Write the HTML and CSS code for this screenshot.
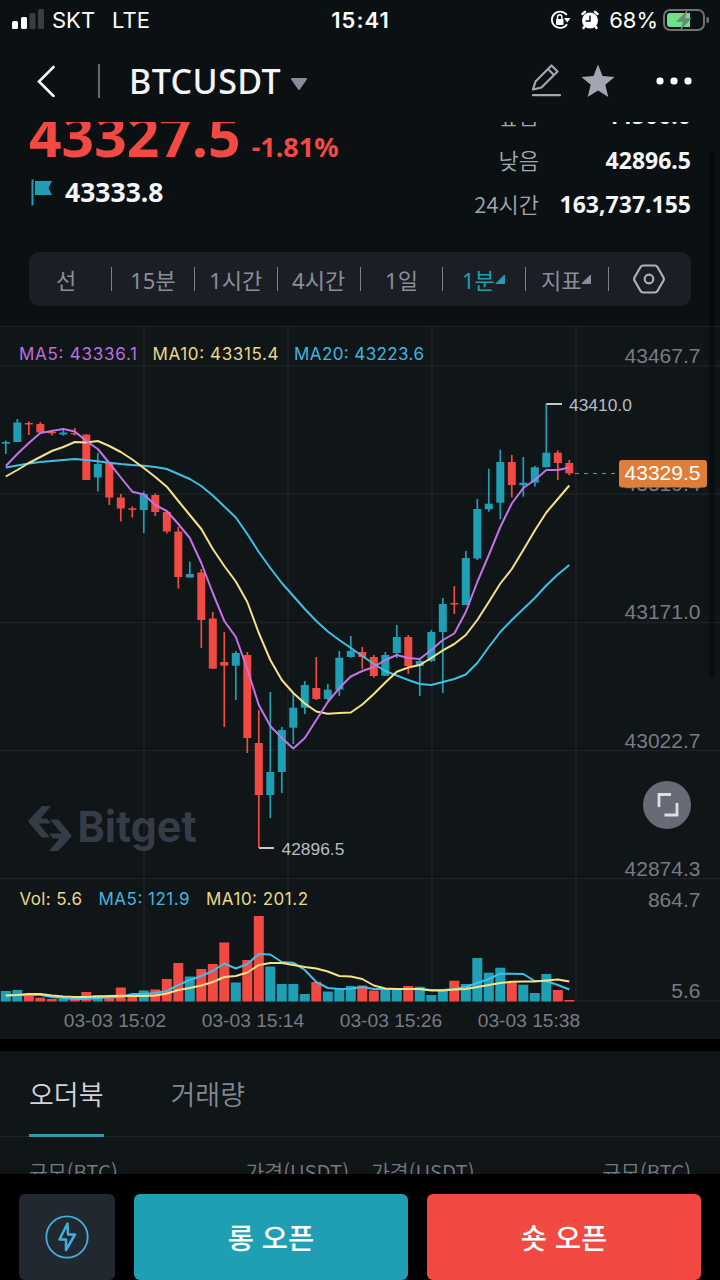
FILE: index.html
```html
<!DOCTYPE html>
<html lang="ko">
<head>
    <meta charset="UTF-8">
    <meta name="viewport" content="width=device-width, initial-scale=1.0">
    <title>BTCUSDT</title>
    <link rel="stylesheet" href="styles.css">
</head>
<body>
    <div class="app">
        <div class="status-bar">
            <div class="status-left">
                <svg class="signal" width="33" height="21" viewBox="0 0 33 21">
                    <rect x="0" y="12" width="6" height="8" rx="1.5" fill="#fff"/>
                    <rect x="9" y="8" width="6" height="12" rx="1.5" fill="#fff"/>
                    <rect x="17.5" y="4" width="6" height="16" rx="1.5" fill="#3a3d40"/>
                    <rect x="26" y="0" width="6" height="20" rx="1.5" fill="#3a3d40"/>
                </svg>
                <span>SKT</span>
                <span class="network">LTE</span>
            </div>
            <div class="time">15:41</div>
            <div class="status-right">
                <svg width="21" height="20" viewBox="0 0 21 20">
                    <path d="M16.8 5A8.2 8.2 0 1 0 17 14.2" fill="none" stroke="#fff" stroke-width="1.8"/>
                    <path d="M14 8H20.5L17.3 12.5Z" fill="#fff"/>
                    <rect x="6" y="9" width="7.5" height="6" rx="1" fill="#fff"/>
                    <path d="M7.5 9.5V7a2.2 2.2 0 0 1 4.4 0V9.5" fill="none" stroke="#fff" stroke-width="1.4"/>
                </svg>
                <svg class="alarm" width="18" height="20" viewBox="0 0 18 20">
                    <circle cx="9" cy="10.5" r="8" fill="#fff"/>
                    <path d="M1.5 4L4 1.8M16.5 4L14 1.8M3.5 16.500L2.500 18M14.500 16.500L15.500 18" stroke="#fff" stroke-width="2.4" stroke-linecap="round"/>
                    <path d="M9 5.500V11H4.500" fill="none" stroke="#0b1013" stroke-width="1.500"/>
                </svg>
                <span>68%</span>
                <svg class="battery" width="46" height="22" viewBox="0 0 46 22">
                    <rect x="1" y="1" width="40" height="20" rx="6" fill="none" stroke="#6c7174" stroke-width="2"/>
                    <path d="M7 4H27V18H7a3 3 0 0 1-3-3V7a3 3 0 0 1 3-3Z" fill="#6fe08b"/>
                    <path d="M43.500 8a3 3 0 0 1 0 6Z" fill="#6c7174"/>
                    <path d="M24 2L14 12.500H20.500L18 20L28 9.500H21.500Z" fill="#549665" stroke="#7d8582" stroke-width="1"/>
                </svg>
            </div>
        </div>

        <div class="header">
            <svg class="back" width="20" height="32" viewBox="0 0 20 32">
                <path d="M17.500 2L3 16.500L17.500 31" fill="none" stroke="#f4f5f7" stroke-width="2.600" stroke-linecap="round"/>
            </svg>
            <div class="divider"></div>
            <h1 class="symbol">BTCUSDT</h1>
            <svg class="caret" width="18" height="14" viewBox="0 0 18 14">
                <path d="M2 2H16L9 12Z" fill="#878c97" stroke="#878c97" stroke-width="2" stroke-linejoin="round"/>
            </svg>
            <div class="header-icons">
                <svg width="31" height="34" viewBox="0 0 31 34">
                    <path d="M2 25.500L4.500 17.500L20.500 1.500L26.500 7.500L10.500 23.500Z M17 5L23 11" fill="none" stroke="#a3a6b1" stroke-width="2.200" stroke-linejoin="round"/>
                    <path d="M2 31.200H29" stroke="#a3a6b1" stroke-width="2.300" stroke-linecap="round"/>
                </svg>
                <svg class="star" width="34" height="34" viewBox="0 0 34 34">
                    <path d="M17 0.500L21.500 12L33.500 13L24.300 20.700L27.300 33L17 26.500L6.700 33L9.700 20.700L0.500 13L12.500 12Z" fill="#a3a6b1"/>
                </svg>
                <svg class="more" width="36" height="8" viewBox="0 0 36 8">
                    <rect x="0.500" y="0.500" width="7" height="7" rx="3" fill="#fff"/>
                    <rect x="14.500" y="0.500" width="7" height="7" rx="3" fill="#fff"/>
                    <rect x="28.500" y="0.500" width="7" height="7" rx="3" fill="#fff"/>
                </svg>
            </div>
        </div>

        <div class="content">
            <div class="ticker">
                <div class="ticker-price">
                    <div class="last">
                        <span class="last-price">43327.5</span>
                        <span class="change">-1.81%</span>
                    </div>
                    <div class="mark">
                        <svg width="22" height="27" viewBox="0 0 22 27">
                            <path d="M1.500 0.500V26.500" stroke="#1f9fb3" stroke-width="2"/>
                            <path d="M4 2H21L17.500 9L21 16H4Z" fill="#1f9fb3"/>
                        </svg>
                        <span>43333.8</span>
                    </div>
                </div>
                <div class="ticker-stats">
                    <div class="stat"><span>높음</span><b>44500.0</b></div>
                    <div class="stat"><span>낮음</span><b>42896.5</b></div>
                    <div class="stat"><span>24시간</span><b>163,737.155</b></div>
                </div>
            </div>

            <div class="intervals">
                <div class="interval first">선</div>
                <div class="interval">15분</div>
                <div class="interval">1시간</div>
                <div class="interval">4시간</div>
                <div class="interval">1일</div>
                <div class="interval active">1분<svg width="10" height="10" viewBox="0 0 10 10"><path d="M1 9.500H9.500V1Z" fill="currentColor" stroke="currentColor" stroke-linejoin="round"/></svg></div>
                <div class="interval">지표<svg width="10" height="10" viewBox="0 0 10 10"><path d="M1 9.500H9.500V1Z" fill="currentColor" stroke="currentColor" stroke-linejoin="round"/></svg></div>
                <div class="interval">
                    <svg width="32" height="30" viewBox="0 0 32 30">
                        <path d="M10 1.500H22Q23.500 1.500 24.300 2.800L30.500 13.500Q31.200 15 30.500 16.500L24.300 27.200Q23.500 28.500 22 28.500H10Q8.500 28.500 7.700 27.200L1.500 16.500Q0.800 15 1.500 13.500L7.700 2.800Q8.500 1.500 10 1.500Z" fill="none" stroke="#adb1bb" stroke-width="2.200"/>
                        <circle cx="16" cy="15" r="4.300" fill="none" stroke="#adb1bb" stroke-width="2.200"/>
                    </svg>
                </div>
            </div>

            <div class="chart">
                <svg width="720" height="712" viewBox="0 327 720 712">
                    <g class="grid">
                        <path d="M144 327V1001M288 327V1001M432 327V1001M576 327V1001"/>
                        <path d="M0 366H720M0 494H720M0 622.500H720M0 750.500H720M0 878.500H720M0 1001H720"/>
                    </g>
                    <g class="watermark">
                        <path d="M42 806H51L40.500 818.500H47L51 823.500H38.500L50 837.500H41.500L29 822.500Q28 821 29 819.700Z"/>
                        <path d="M58 851H49L59.500 838.500H53L49 833.500H61.500L50 819.500H58.500L71 834.500Q72 836 71 837.300Z"/>
                        <text x="77.500" y="842" textLength="119" lengthAdjust="spacingAndGlyphs">Bitget</text>
                    </g>
                    <g id="volumes"></g>
                    <g id="candles"></g>
                    <g id="lines"></g>
                    <g class="axis">
                        <text x="700.500" y="362.500">43467.7</text>
                        <text x="700.500" y="491">43319.4</text>
                        <text x="700.500" y="619">43171.0</text>
                        <text x="700.500" y="747.500">43022.7</text>
                        <text x="700.500" y="875.500">42874.3</text>
                        <text x="700.500" y="906.500">864.7</text>
                        <text x="700.500" y="998">5.6</text>
                    </g>
                    <g class="dates">
                        <text x="115" y="1027">03-03 15:02</text>
                        <text x="253" y="1027">03-03 15:14</text>
                        <text x="391" y="1027">03-03 15:26</text>
                        <text x="529" y="1027">03-03 15:38</text>
                    </g>
                    <g class="legend">
                        <text class="ma5" x="19" y="359.500" textLength="118">MA5: 43336.1</text>
                        <text class="ma10" x="152.500" y="359.500" textLength="126">MA10: 43315.4</text>
                        <text class="ma20" x="294" y="359.500" textLength="130">MA20: 43223.6</text>
                        <text class="ma10" x="19.500" y="904.500" textLength="62.500">Vol: 5.6</text>
                        <text class="ma20" x="98.500" y="904.500" textLength="91">MA5: 121.9</text>
                        <text class="ma10" x="206" y="904.500" textLength="102">MA10: 201.2</text>
                    </g>
                    <g class="extremes">
                        <path d="M546.500 404H562M259 848H274"/>
                        <text x="569" y="410.500">43410.0</text>
                        <text x="281.500" y="854.500">42896.5</text>
                    </g>
                    <path class="price-line" d="M575 473.500H619"/>
                    <rect x="619" y="460" width="88" height="27.500" rx="3" fill="#df7d3b"/>
                    <text class="price-tag" x="700.500" y="480">43329.5</text>
                    <g>
                        <circle cx="667" cy="805" r="24" fill="#666b75"/>
                        <path d="M659 807V794.500H671M677 803V815H664.500" fill="none" stroke="#dcdee2" stroke-width="2.800"/>
                    </g>
                </svg>
            </div>

            <div class="orders">
                <div class="tabs">
                    <div class="tab active">오더북</div>
                    <div class="tab">거래량</div>
                </div>
                <div class="columns">
                    <div class="side"><span>규모(BTC)</span><span>가격(USDT)</span></div>
                    <div class="side"><span>가격(USDT)</span><span>규모(BTC)</span></div>
                </div>
            </div>
            <div class="scrollbar"></div>
        </div>

        <div class="actions">
            <button class="quick">
                <svg width="44" height="44" viewBox="0 0 44 44">
                    <circle cx="22" cy="22" r="20.700" fill="none" stroke="#43afe0" stroke-width="1.800"/>
                    <path d="M22.500 8.500L14.500 24.500H21V35L30 19.500H23Z" fill="none" stroke="#43afe0" stroke-width="2.500" stroke-linejoin="round"/>
                </svg>
            </button>
            <button class="long">롱 오픈</button>
            <button class="short">숏 오픈</button>
        </div>
    </div>
    <script src="script.js"></script>
</body>
</html>
```
FILE: styles.css
```css
* {
    box-sizing: border-box;
}

body {
    margin: 0;
    background: #000;
    color: #f4f5f7;
    font-family: "Noto Sans", "Noto Sans CJK KR", sans-serif;
}

svg {
    display: block;
    flex-shrink: 0;
}

.app {
    width: 720px;
    height: 1280px;
    display: flex;
    flex-direction: column;
    overflow: hidden;
    background: #0b1013;
}

/* Status bar */
.status-bar {
    height: 40px;
    padding: 0 11px 0 12px;
    display: flex;
    align-items: center;
    justify-content: space-between;
    font-family: Inter, sans-serif;
    font-size: 22px;
    color: #fff;
}

.status-left,
.status-right {
    width: 300px;
    display: flex;
    align-items: center;
}

.signal {
    margin: -2px 7px 0 0;
}

.network {
    margin-left: 17px;
}

.time {
    font-weight: 600;
    letter-spacing: 1px;
}

.status-right {
    justify-content: flex-end;
}

.alarm {
    margin: 0 10px 0 10px;
}

.battery {
    margin: -1px 0 0 5px;
}

/* Header */
.header {
    height: 82px;
    padding: 0 28px 0 36px;
    display: flex;
    align-items: center;
}

.divider {
    width: 2px;
    height: 34px;
    margin: 0 29px 0 42px;
    background: #646973;
}

.symbol {
    margin: 0;
    font-size: 34px;
    font-weight: 500;
    line-height: 40px;
    letter-spacing: 0.450px;
}

.caret {
    margin: 5px 0 0 9px;
}

.header-icons {
    margin-left: auto;
    display: flex;
    align-items: center;
}

.star {
    margin: 0 41px 0 19px;
}

/* Scrolling content */
.content {
    position: relative;
    height: 1052px;
    overflow: hidden;
}

.ticker {
    height: 130px;
    padding: 0 29px;
    display: flex;
    justify-content: space-between;
    align-items: flex-end;
}

.ticker-price {
    height: 150px;
}

.last {
    height: 60px;
    display: flex;
    align-items: baseline;
    gap: 11px;
    color: #f24a42;
    font-weight: 700;
    line-height: 66px;
}

.last-price {
    font-size: 57px;
}

.change {
    font-size: 27px;
}

.mark {
    display: flex;
    align-items: center;
    gap: 12px;
    padding-left: 2px;
    font-size: 26.500px;
    font-weight: 700;
    line-height: 60px;
}

.ticker-stats {
    height: 159px;
}

.stat {
    height: 44px;
    display: flex;
    align-items: center;
    justify-content: flex-end;
    gap: 20px;
    font-size: 23px;
}

.stat:first-child {
    margin-bottom: 1px;
}

.stat b {
    width: 132px;
    text-align: right;
}

.stat span {
    margin-top: -2px;
    color: #a3a6b1;
    font-family: "Noto Sans CJK KR", sans-serif;
    font-size: 22px;
    font-weight: 350;
}

.intervals {
    height: 54px;
    margin: 0 29px 20px;
    display: flex;
    align-items: center;
    border-radius: 11px;
    background: #1b1e24;
    color: #8a8e99;
    font-size: 22px;
    font-family: "Noto Sans", "Noto Sans CJK KR", sans-serif;
}

.interval {
    flex: 1;
    height: 24px;
    display: flex;
    align-items: center;
    justify-content: center;
    border-left: 1px solid #7c808a;
}

.interval.first {
    flex: 0 0 82px;
    border-left: none;
    padding-right: 8px;
}

.interval.active {
    color: #1f9fb3;
}

.interval > svg {
    margin-top: 9px;
}

.interval > svg:only-child {
    margin: 0 2px 0 0;
}

/* Chart */
.chart {
    height: 713px;
    border-top: 1px solid #1e2327;
    background: #101518;
}

.grid {
    fill: none;
    stroke: #1d2227;
    stroke-width: 1.500;
}

.watermark {
    fill: #353b47;
    font-family: Inter, sans-serif;
    font-size: 43px;
    font-weight: 700;
}

.axis {
    fill: #787b84;
    font-family: "Liberation Sans", Arial, sans-serif;
    font-size: 21px;
    text-anchor: end;
}

.dates {
    fill: #787b84;
    font-family: "Liberation Sans", Arial, sans-serif;
    font-size: 19.200px;
    text-anchor: middle;
}

.legend {
    font-family: Inter, sans-serif;
    font-size: 17px;
}

.ma5 {
    fill: #bd70e0;
}

.ma10 {
    fill: #ecd987;
}

.ma20 {
    fill: #40b7e0;
}

.extremes {
    fill: #b9bcc4;
    stroke-width: 2;
    font-family: "Liberation Sans", Arial, sans-serif;
    font-size: 17.400px;
}

.extremes path {
    stroke: #c4c6cc;
}

.price-line {
    stroke: #cc7538;
    stroke-width: 1.200;
    stroke-dasharray: 4 5;
}

.price-tag {
    fill: #fff;
    font-family: "Liberation Sans", Arial, sans-serif;
    font-size: 21px;
    text-anchor: end;
}

.up {
    fill: #1f9fb3;
}

.down {
    fill: #f24a42;
}

.line {
    fill: none;
    stroke-width: 2;
    stroke-linejoin: round;
}

.line.purple {
    stroke: #c373e8;
}

.line.yellow {
    stroke: #f5e287;
}

.line.blue {
    stroke: #40bfe6;
}

/* Order book */
.orders {
    height: 123px;
    margin-top: 12px;
    background: #101518;
    box-shadow: 0 -12px 0 #000;
}

.tabs {
    height: 86px;
    padding: 0 29px;
    display: flex;
    gap: 67px;
    border-bottom: 1px solid #1e2327;
    font-family: "Noto Sans CJK KR", sans-serif;
    font-size: 27px;
    font-weight: 350;
    color: #858894;
}

.tab {
    height: 86px;
    line-height: 86px;
}

.tab.active {
    color: #d3d4dd;
    border-bottom: 3px solid #2f9bab;
}

.columns {
    display: flex;
    gap: 22px;
    padding: 20px 29px 0;
    color: #767a85;
    font-family: "Noto Sans CJK KR", sans-serif;
    font-size: 20.500px;
    font-weight: 350;
    line-height: 28px;
}

.side {
    flex: 1;
    display: flex;
    justify-content: space-between;
}

/* Overlays the right edge of the content */
.scrollbar {
    position: absolute;
    top: 28px;
    right: 5px;
    width: 6px;
    height: 528px;
    border-radius: 3px;
    background: rgba(0, 0, 0, 0.35);
}

/* Bottom buttons */
.actions {
    height: 106px;
    padding: 20px 19px 0;
    display: flex;
    gap: 19px;
    background: #000;
}

button {
    height: 86px;
    padding: 0 0 2px;
    border: none;
    border-radius: 6px;
    color: #fff;
    font-family: "Noto Sans CJK KR", sans-serif;
    font-size: 28.500px;
    font-weight: 500;
}

.quick {
    width: 96px;
    padding: 0;
    display: flex;
    align-items: center;
    justify-content: center;
    background: #21282f;
}

.long {
    flex: 1;
    background: #1f9fb3;
}

.short {
    flex: 1;
    background: #f24a42;
}
```
FILE: script.js
```js
const STEP = 11.5;
const START = 5.8;
const BASE = 1001.5;
const SVG_NS = "http://www.w3.org/2000/svg";

// [direction, wick top, body top, body bottom, wick bottom, volume top]
const candles = [
    ["up", 440.5, 442, 443.7, 454, 991],
    ["up", 419, 422.5, 442, 442, 990],
    ["down", 421.5, 423, 424.5, 435, 995.5],
    ["down", 422, 424, 432.5, 432.5, 997.7],
    ["down", 430.5, 432, 433.3, 435.5, 999],
    ["up", 429.5, 432.5, 434.5, 435.5, 999],
    ["down", 428, 433, 434.3, 435.5, 998.5],
    ["down", 434.5, 434.5, 480, 480, 992],
    ["up", 453, 464, 477.5, 491.5, 995],
    ["down", 463, 463, 497.5, 505, 997],
    ["down", 494, 497.5, 508.5, 521.5, 987.5],
    ["down", 506.5, 508.3, 509.8, 517.5, 996],
    ["up", 491.5, 494, 510, 533, 990.5],
    ["down", 493.5, 495, 512, 516, 989.5],
    ["down", 511.5, 512, 531.5, 533.5, 979],
    ["down", 527, 531.5, 577, 588.5, 963],
    ["up", 561.5, 574, 577.5, 577.5, 976.5],
    ["down", 569, 572.5, 620, 648, 969],
    ["down", 612, 618.5, 668.7, 668.7, 964],
    ["down", 632, 662, 665.7, 727, 942.5],
    ["up", 651, 653, 665.7, 700, 982.5],
    ["down", 652, 655, 738, 753, 960],
    ["down", 710, 743, 795, 848, 916],
    ["up", 692, 772, 795, 818, 966.5],
    ["up", 727, 730, 772, 793, 984],
    ["up", 693, 707.7, 727.7, 744, 984],
    ["up", 681, 685, 707.7, 714, 994],
    ["down", 657, 688, 699, 700, 982],
    ["up", 684, 689.7, 699, 700, 991.5],
    ["up", 651, 657.7, 689.7, 696, 989],
    ["up", 636, 651, 657, 657.7, 986],
    ["down", 647, 652, 657, 669, 985.5],
    ["down", 655, 657, 676, 677.5, 990.5],
    ["up", 652, 655, 675.7, 676, 989.5],
    ["up", 625, 637, 653, 658, 989.5],
    ["down", 635, 637, 666, 674, 986],
    ["up", 658, 661, 666, 696, 986.7],
    ["up", 630, 632, 661, 662, 995],
    ["up", 598, 604, 632, 693, 990.5],
    ["down", 586, 603, 604.5, 614, 980.7],
    ["up", 551, 558, 605, 605, 984],
    ["up", 499, 509, 558.5, 560, 958],
    ["up", 468.7, 503.7, 509.3, 511.7, 972.7],
    ["up", 449.7, 462, 502.7, 519.3, 967.7],
    ["down", 455, 462, 485, 497.3, 982.5],
    ["up", 457, 482.7, 485.3, 496.7, 984.7],
    ["up", 466, 467.3, 482.7, 486.7, 993],
    ["up", 403.5, 452.7, 467.3, 467.3, 974],
    ["down", 450.3, 452.7, 463, 480, 990],
    ["down", 460, 463, 473.3, 475.3, 1000]
];

const ma5 = [466, 454, 443, 433, 431, 429, 431.5, 441, 449, 463, 477.5, 491.7, 494.5, 505, 511, 524, 538, 563, 593, 621, 637, 669, 705, 726, 738, 748.5, 738, 720, 702, 688, 676.5, 671, 667, 660, 655, 658, 659, 650, 640, 633.5, 612, 582, 555, 527, 503.5, 488, 480, 470, 470, 467.5];
const ma10 = [476.5, 470, 463, 457, 451, 447, 442, 442.5, 441, 446, 452, 459.5, 468, 477, 486.7, 501, 515, 529, 549, 566, 581.5, 602, 633, 660, 680, 693, 703.5, 711.5, 713.7, 713, 712.5, 704.5, 694, 682.5, 671.7, 667.5, 665, 658, 650.3, 644, 635, 620, 602, 583.5, 569, 550, 530.5, 512.5, 499, 485.5];
const ma20 = [467.5, 465.5, 463.5, 462, 461, 460, 459, 460, 461.3, 462.7, 464, 465, 465.7, 467, 469, 474, 479, 486, 495.5, 506.5, 517.5, 534, 552, 568, 583, 596, 609, 621, 631.5, 640, 648, 656, 664, 671, 675.5, 680, 684, 685, 682, 679, 674.5, 663, 647, 632, 620, 609, 598, 585.5, 574.5, 565];
const volMa5 = [995.5, 995, 994.7, 995, 997, 998, 999, 999, 998, 997.5, 997, 994, 994, 993, 991, 985, 980, 976, 971, 963.5, 968.5, 964, 954, 954.5, 962, 962.7, 970, 982, 988, 989, 988.7, 987, 989, 989, 989, 989, 989, 990, 990, 989, 987, 983, 979, 973.7, 973.7, 974, 981, 981, 985, 989.5];
const volMa10 = [995.5, 995, 994, 994, 995.5, 996.5, 997, 997, 996.5, 996, 995.7, 996, 996, 995.5, 993.5, 990, 988, 985.5, 982, 977, 976, 972.5, 965, 963, 963, 965, 967, 968.5, 971.5, 976, 976.5, 979, 985.5, 988.5, 989, 989, 989, 990.5, 990.5, 989.5, 989, 987, 985, 983, 981.7, 981.5, 981.5, 980.5, 979.5, 981.5];

function addShape(parentId, name, attrs) {
    const el = document.createElementNS(SVG_NS, name);
    for (const key in attrs) {
        el.setAttribute(key, attrs[key]);
    }
    document.getElementById(parentId).appendChild(el);
}

function addBar(parentId, x, top, bottom, width, dir) {
    addShape(parentId, "rect", { x: x - width / 2, y: top, width: width, height: bottom - top, class: dir });
}

function addLine(values, color) {
    const points = values.map((y, i) => `${START + i * STEP},${y}`).join(" ");
    addShape("lines", "polyline", { points: points, class: "line " + color });
}

candles.forEach(([dir, high, top, bottom, low, volume], i) => {
    const x = START + i * STEP;
    addBar("volumes", x, volume, BASE, 10, dir);
    addBar("candles", x, high, low, 1.7, dir);
    addBar("candles", x, top, bottom, 8, dir);
});

addLine(ma20, "blue");
addLine(ma10, "yellow");
addLine(ma5, "purple");
addLine(volMa5, "blue");
addLine(volMa10, "yellow");
```
